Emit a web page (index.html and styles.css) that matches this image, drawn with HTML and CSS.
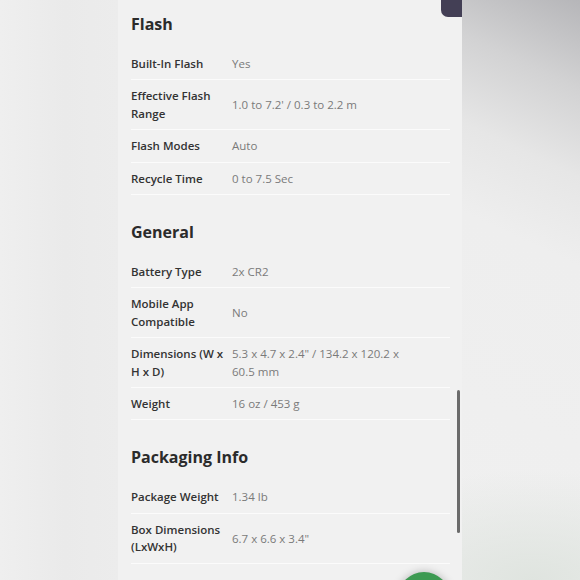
FILE: index.html
```html
<!DOCTYPE html>
<html lang="en">
<head>
<meta charset="utf-8">
<title>Specs</title>
<link rel="stylesheet" href="styles.css">
</head>
<body>
<div class="stage">
  <div class="side side-left"></div>
  <main class="panel">
    <section class="group">
      <h2 class="group-title">Flash</h2>
      <div class="row"><div class="label">Built-In Flash</div><div class="value">Yes</div></div>
      <div class="row"><div class="label">Effective Flash Range</div><div class="value">1.0 to 7.2' / 0.3 to 2.2 m</div></div>
      <div class="row"><div class="label">Flash Modes</div><div class="value">Auto</div></div>
      <div class="row"><div class="label">Recycle Time</div><div class="value">0 to 7.5 Sec</div></div>
    </section>
    <section class="group">
      <h2 class="group-title">General</h2>
      <div class="row"><div class="label">Battery Type</div><div class="value">2x CR2</div></div>
      <div class="row"><div class="label">Mobile App Compatible</div><div class="value">No</div></div>
      <div class="row"><div class="label">Dimensions (W x H x D)</div><div class="value">5.3 x 4.7 x 2.4" / 134.2 x 120.2 x 60.5 mm</div></div>
      <div class="row"><div class="label">Weight</div><div class="value">16 oz / 453 g</div></div>
    </section>
    <section class="group">
      <h2 class="group-title">Packaging Info</h2>
      <div class="row"><div class="label">Package Weight</div><div class="value">1.34 lb</div></div>
      <div class="row"><div class="label">Box Dimensions (LxWxH)</div><div class="value">6.7 x 6.6 x 3.4"</div></div>
    </section>
    <div class="top-tab"></div>
    <div class="scrollbar"></div>
    <div class="fab"></div>
  </main>
  <div class="side side-right"></div>
</div>
</body>
</html>
```

FILE: styles.css
```css
* { box-sizing: border-box; }
html, body { margin: 0; padding: 0; }
body {
  width: 580px;
  height: 580px;
  overflow: hidden;
  font-family: "Open Sans", "Noto Sans", sans-serif;
  background: #ededed;
}
.stage {
  display: flex;
  width: 580px;
  height: 580px;
}
.side {
  width: 118px;
  flex: none;
}
.side-left {
  background: linear-gradient(90deg, #efefef 0%, #eaeaea 55%, #ececec 100%);
}
.side-right {
  background:
    radial-gradient(ellipse 220px 110px at 60% 100%, #dfe4df 0%, rgba(236,236,236,0) 100%),
    linear-gradient(205deg, #b6b6b9 0%, #d2d2d3 14%, #e6e6e6 28%, #eeeeee 42%, #f0f0f0 100%);
}
.panel {
  position: relative;
  width: 344px;
  flex: none;
  background: #f1f1f1;
  padding: 13px 12px 0 13px;
  overflow: hidden;
}
.group-title {
  margin: 26px 0 13px;
  font-size: 16px;
  line-height: 22px;
  font-weight: 700;
  color: #2b2b2b;
}
.group:first-child .group-title { margin-top: 0; }
.row {
  display: grid;
  grid-template-columns: 101px 1fr;
  align-items: center;
  padding: 7px 30px 7px 0;
  border-bottom: 1px solid #fbfbfb;
  font-size: 11.5px;
  line-height: 17.4px;
}
.label {
  font-weight: 600;
  color: #333333;
  padding-right: 4px;
}
.value {
  color: #7a7a7a;
}
.top-tab {
  position: absolute;
  top: 0;
  right: 0;
  width: 21px;
  height: 17px;
  background: #433f55;
  border-bottom-left-radius: 7px;
}
.scrollbar {
  position: absolute;
  left: 339px;
  top: 390px;
  width: 2.5px;
  height: 143px;
  border-radius: 2px;
  background: #6b6b6b;
}
.fab {
  position: absolute;
  left: 280px;
  top: 572px;
  width: 52px;
  height: 52px;
  border-radius: 50%;
  background: #3d9a52;
  box-shadow: 0 0 8px rgba(0,0,0,0.25);
}
```
